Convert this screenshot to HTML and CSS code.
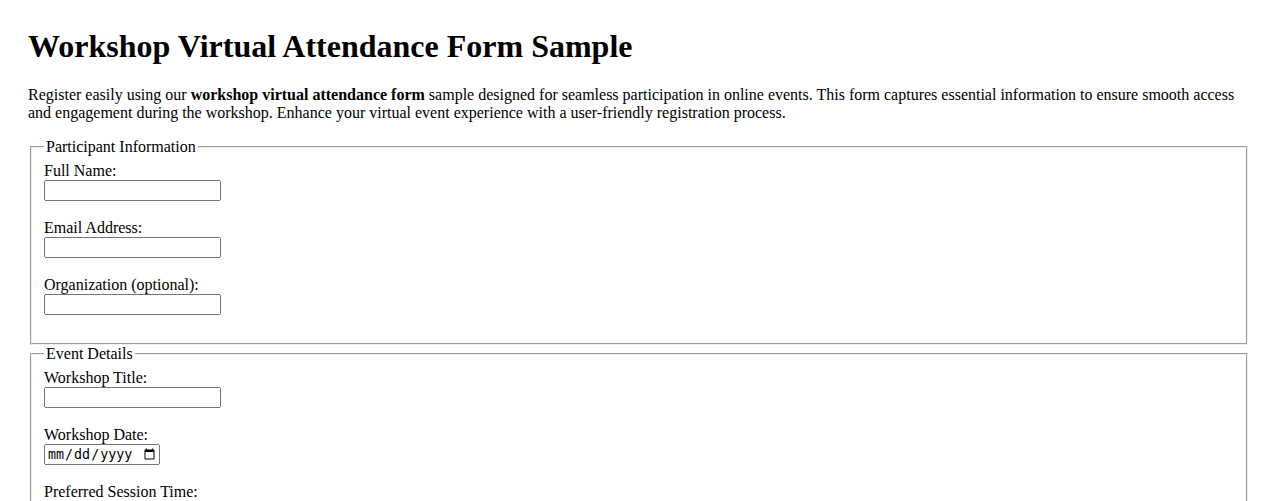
FILE: index.html
```html
<html>
	<head>
		<title>Workshop Virtual Attendance Form Sample</title>
		<link rel="stylesheet" href="styles.css">
	</head>
	<body>
		<h1>Workshop Virtual Attendance Form Sample</h1>
		<p>Register easily using our <strong>workshop virtual attendance form</strong> sample designed for seamless participation in online events. This form captures essential information to ensure smooth access and engagement during the workshop. Enhance your virtual event experience with a user-friendly registration process.</p>
		<form>
			<fieldset>
				<legend>Participant Information</legend>
				<label for="fullname">Full Name:</label><br>
				<input type="text" id="fullname" name="fullname"><br><br>
				<label for="email">Email Address:</label><br>
				<input type="email" id="email" name="email"><br><br>
				<label for="org">Organization (optional):</label><br>
				<input type="text" id="org" name="org"><br><br>
			</fieldset>
			<fieldset>
				<legend>Event Details</legend>
				<label for="title">Workshop Title:</label><br>
				<input type="text" id="title" name="title"><br><br>
				<label for="date">Workshop Date:</label><br>
				<input type="date" id="date" name="date"><br><br>
				<label for="session">Preferred Session Time:</label><br>
				<select id="session" name="session">
					<option>Morning</option>
					<option>Afternoon</option>
					<option>Evening</option>
				</select><br><br>
			</fieldset>
			<fieldset>
				<legend>Additional Information</legend>
				<label for="notes">Questions or Comments:</label><br>
				<textarea id="notes" name="notes" rows="4" cols="40"></textarea><br><br>
			</fieldset>
			<br>
			<input type="submit" value="Register">
		</form>
	</body>
</html>
```

FILE: styles.css
```css
body {
	margin: 0;
	padding: 28px;
	font-family: "Liberation Serif", "Times New Roman", serif;
	font-size: 16px;
}
h1 {
	margin-top: 0;
	font-size: 32px;
}
input[type="text"], input[type="email"] {
	width: 177px;
	box-sizing: border-box;
}
input[type="date"] {
	width: 116px;
	box-sizing: border-box;
}
```
